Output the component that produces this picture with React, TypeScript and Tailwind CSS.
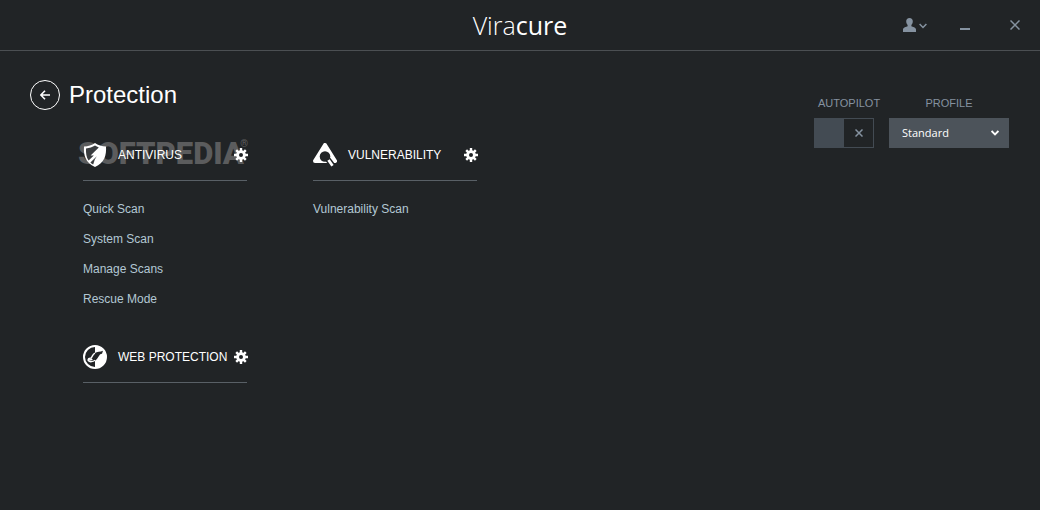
import { ReactNode, useState } from 'react';

type SectionProps = {
  title: string;
  icon: ReactNode;
  links?: string[];
  watermark?: ReactNode;
};

const ShieldIcon = () => (
  <svg viewBox="0 0 24 24" className="size-6" aria-hidden="true">
    <path
      d="M12 0C9 2.200 5 3.300 1 3.500 .4 12 2.500 20 12 24 21.500 20 23.600 12 23 3.500 19 3.300 15 2.200 12 0Z"
      fill="#fff"
    />
    <path
      d="M3 5.500C6.500 5.200 9.500 4.200 12 2.600L15.800 4.400 7.600 12.600 10.800 12.400 5.600 17.600C3.300 14.200 2.800 9.800 3 5.500Z"
      fill="#3a3d3f"
    />
    <path d="M13.800 13.200 7.400 19.400C8.300 20.400 9.200 21 10.200 21.500L11.800 16.400Z" fill="#3a3d3f" />
  </svg>
);

const TriangleIcon = () => (
  <svg viewBox="0 0 24 24" className="size-6" aria-hidden="true">
    <path
      d="M12 2 22 18H2Z"
      fill="#fff"
      stroke="#fff"
      strokeWidth="4"
      strokeLinejoin="round"
    />
    <circle cx="12" cy="13.500" r="5.300" fill="#212426" />
    <path d="M15 16.500 20 23" stroke="#212426" strokeWidth="5.500" />
    <path d="M15.500 17 19.500 22.800" stroke="#fff" strokeWidth="2.800" />
  </svg>
);

const WebIcon = () => (
  <svg viewBox="0 0 24 24" className="size-6" aria-hidden="true">
    <circle cx="12" cy="12" r="11" fill="#212426" stroke="#fff" strokeWidth="2" />
    <path d="M12 1A11 11 0 0 1 12 23Z" fill="#fff" />
    {/* dark body over the white half, white outline over the dark half */}
    <path
      d="M12 8C14 6.600 17 7.200 20 5.800L19 8.800C17.200 8.800 16.600 10 15.600 11.600 14.600 13.400 13.400 14.800 12 15.800Z"
      fill="#212426"
    />
    <path
      d="M12 8.200C9.400 9.200 9.600 11.400 8 13.200 6.200 12.800 4.800 14 5.200 15.600 6.800 17.400 10 16.800 12 15.200M5.400 15.400C6.800 14.600 8.400 15 9.400 14.400"
      fill="none"
      stroke="#fff"
      strokeWidth="1.400"
    />
  </svg>
);

const GearIcon = () => (
  <svg viewBox="0 0 14 14" className="size-3.5" aria-hidden="true">
    <g stroke="#fff" strokeWidth="2.400">
      <path d="M7 0V14M0 7H14M2.200 2.200 11.800 11.800M11.800 2.200 2.200 11.800" />
    </g>
    <circle cx="7" cy="7" r="4.800" fill="#fff" />
    <circle cx="7" cy="7" r="2" fill="#212426" />
  </svg>
);

const Watermark = () => (
  <div
    aria-hidden="true"
    className="absolute -left-[5px] -top-[4px] font-['Roboto',sans-serif] text-[31px] font-black leading-[36px] text-[#5b5c5d]"
  >
    SOFTPEDIA
    <span className="absolute -right-1 top-0.5 text-[10px] font-semibold leading-[12px]">®</span>
  </div>
);

const Section = ({ title, icon, links = [], watermark }: SectionProps) => (
  <section>
    <div className="relative border-b border-[#596066] pb-2.5">
      {watermark}
      <div className="relative flex h-[30px] items-center">
        {icon}
        <h2 className="ml-[11px] whitespace-nowrap text-[12px] text-white">{title}</h2>
        <button
          type="button"
          aria-label={`${title} settings`}
          className="-mr-px ml-auto"
        >
          <GearIcon />
        </button>
      </div>
    </div>
    {links.length > 0 && (
      <ul className="mt-[13px]">
        {links.map((link) => (
          <li key={link} className="text-[12px] leading-[30px] text-[#b3c8d4]">
            <a href="#">{link}</a>
          </li>
        ))}
      </ul>
    )}
  </section>
);

const Header = () => (
  <header className="grid grid-cols-3 items-center border-b border-[#4b4f52] px-5">
    <span />
    <div className="text-center font-['Open_Sans',sans-serif] text-[25px] leading-[50px] text-white">
      <span className="font-light">Vira</span>
      <span className="font-medium">cure</span>
    </div>
    <div className="flex items-center justify-end text-[#8592a0]">
      <button type="button" aria-label="Account" className="flex items-center gap-[3px]">
        <svg viewBox="0 0 13 14" className="h-3.5 w-[13px]" fill="currentColor">
          <path d="M6.500 0C8.600 0 9.800 1.400 9.800 3.300 9.800 5 9.100 6.200 8.400 7V8.300C9.700 9.100 13 9.300 13 11.500V14H0V11.500C0 9.300 3.300 9.100 4.600 8.300V7C3.900 6.200 3.200 5 3.200 3.300 3.200 1.400 4.400 0 6.500 0Z" />
        </svg>
        <svg viewBox="0 0 8 6" className="mt-0.5 h-1.5 w-2" fill="none" stroke="currentColor" strokeWidth="1.500">
          <path d="M.6 1 4 4.500 7.400 1" />
        </svg>
      </button>
      <button type="button" aria-label="Minimize" className="ml-[33px]">
        <svg viewBox="0 0 10 10" className="size-2.5" fill="currentColor">
          <path d="M0 8H10V10H0Z" />
        </svg>
      </button>
      <button type="button" aria-label="Close" className="ml-10">
        <svg viewBox="0 0 10 10" className="size-2.5" stroke="currentColor" strokeWidth="1.500">
          <path d="M.5.5 9.500 9.500M9.500.5.5 9.500" />
        </svg>
      </button>
    </div>
  </header>
);

const Controls = () => {
  const [autopilot, setAutopilot] = useState(false);
  const [profile, setProfile] = useState('Standard');

  return (
    <div className="mt-4 flex gap-[15px] text-[#8592a0]">
      <div className="w-[60px]">
        <label htmlFor="autopilot" className="block pl-1 text-[11px] leading-[14px]">
          AUTOPILOT
        </label>
        <label
          htmlFor="autopilot"
          className="relative mt-2 flex h-[30px] border border-[#434b53]"
        >
          <input
            id="autopilot"
            type="checkbox"
            className="peer sr-only"
            checked={autopilot}
            onChange={(e) => setAutopilot(e.target.checked)}
          />
          <span className="w-[29px] bg-[#434b53] peer-checked:order-2" />
          <span className="flex flex-1 items-center justify-center">
            <svg viewBox="0 0 8 8" className="size-2" stroke="currentColor" strokeWidth="1.500">
              <path d="M.5.5 7.500 7.500M7.500.5.5 7.500" />
            </svg>
          </span>
        </label>
      </div>
      <div className="w-[120px]">
        <label htmlFor="profile" className="block text-center text-[11px] leading-[14px]">
          PROFILE
        </label>
        <div className="relative mt-2">
          <select
            id="profile"
            value={profile}
            onChange={(e) => setProfile(e.target.value)}
            className="block h-[30px] w-full appearance-none bg-[#4c535a] px-[13px] font-['Open_Sans',sans-serif] text-[11px] font-medium text-white"
          >
            <option>Standard</option>
          </select>
          <svg
            viewBox="0 0 8 6"
            className="pointer-events-none absolute right-2.5 top-3 h-1.5 w-2"
            fill="none"
            stroke="#fff"
            strokeWidth="1.800"
          >
            <path d="M.6 1 4 4.500 7.400 1" />
          </svg>
        </div>
      </div>
    </div>
  );
};

export default function App() {
  return (
    <div className="min-h-screen bg-[#212426] font-['Liberation_Sans',Arial,sans-serif]">
      <Header />
      <main className="flex items-start justify-between pb-8 pl-[30px] pr-[31px] pt-[29px]">
        <div>
          <div className="flex h-[30px] items-center gap-[9px]">
            <button
              type="button"
              aria-label="Back"
              className="flex size-[30px] items-center justify-center rounded-full border border-white"
            >
              <svg viewBox="0 0 10 10" className="size-2.5" fill="none" stroke="#fff" strokeWidth="1.600">
                <path d="M10 5H1M5 .7.8 5 5 9.300" />
              </svg>
            </button>
            <h1 className="text-[24px] leading-[30px] text-white">Protection</h1>
          </div>
          <div className="ml-[53px] mt-[30px] grid grid-cols-[164px_164px] gap-x-[66px] gap-y-7">
            <Section
              title="ANTIVIRUS"
              icon={<ShieldIcon />}
              links={['Quick Scan', 'System Scan', 'Manage Scans', 'Rescue Mode']}
              watermark={<Watermark />}
            />
            <Section
              title="VULNERABILITY"
              icon={<TriangleIcon />}
              links={['Vulnerability Scan']}
            />
            <Section title="WEB PROTECTION" icon={<WebIcon />} />
          </div>
        </div>
        <Controls />
      </main>
    </div>
  );
}
